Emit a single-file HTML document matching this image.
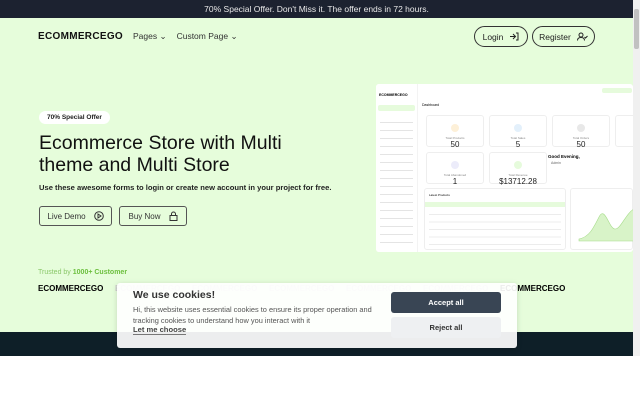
<!DOCTYPE html>
<html><head><meta charset="utf-8"><style>
*{box-sizing:border-box;margin:0;padding:0}
body{width:640px;height:400px;overflow:hidden;background:#fff;font-family:"Liberation Sans","DejaVu Sans",sans-serif;position:relative}
.page{position:absolute;left:0;top:0;width:633px;height:400px}
.top{height:18px;background:#1c2230;color:#e8e8e8;font-size:8.5px;text-align:center;line-height:18px}
.hero{position:absolute;top:18px;left:0;width:633px;height:314px;background:#e6fddb}
.band{position:absolute;top:332px;left:0;width:633px;height:24px;background:#0e1f28}
.logo{font-weight:bold;font-size:10px;letter-spacing:.3px;color:#111}
.nav{position:absolute;top:13px;left:38px;display:flex;align-items:center;gap:10px}
.nav span.l{font-size:8.5px;color:#333}
.btn{position:absolute;border:1px solid #333;border-radius:14px;font-size:8.5px;color:#222;display:flex;align-items:center;justify-content:center;gap:6px}
.pill{position:absolute;left:39px;top:93px;background:#fff;border-radius:8px;font-size:6.5px;font-weight:bold;padding:3px 8px;color:#222}
h1{position:absolute;left:39px;top:114px;font-size:19.5px;line-height:22px;font-weight:normal;color:#111;width:262px}
.sub{position:absolute;left:39px;top:165px;font-size:7.6px;font-weight:bold;color:#222}
.b2{position:absolute;top:188px;height:20px;border:1px solid #555;border-radius:3px;font-size:8px;display:flex;align-items:center;justify-content:center;gap:8px;color:#333}
.dash{position:absolute;left:376px;top:66px;width:257px;height:168px;background:#fff;border-radius:3px;overflow:hidden}
.card{position:absolute;background:#fff;border:1px solid #eee;border-radius:3px;text-align:center}
.card .t{font-size:3px;color:#888;margin-top:26px}
.card .v{font-size:8px;color:#222}
.ic{width:8px;height:8px;border-radius:50%;margin:8px auto 0}
.trusted{position:absolute;left:38px;top:251px;font-size:7px;color:#8bc86a}
.trusted b{color:#6cbf3e}
.logos{position:absolute;top:266px;left:38px;font-size:8px;font-weight:bold;white-space:nowrap}
.logos span{display:inline-block;width:77px}
.cookie{position:absolute;left:117px;top:283px;width:400px;height:65px;background:rgba(255,255,255,.92);border-radius:3px;box-shadow:0 1px 6px rgba(0,0,0,.15)}
.scroll{position:absolute;right:0;top:0;width:7px;height:356px;background:#f0f0f0}
.scroll div{position:absolute;left:1px;top:9px;width:5px;height:40px;background:#c1c1c1;border-radius:2px}
</style></head><body>
<div class="page">
<div class="top">70% Special Offer. Don't Miss it. The offer ends in 72 hours.</div>
<div class="hero">
 <div class="nav"><span class="logo">ECOMMERCEGO</span><span class="l">Pages ⌄</span><span class="l">Custom Page ⌄</span></div>
 <div class="btn" style="left:474px;top:8px;width:54px;height:21px">Login <svg width="10" height="9" viewBox="0 0 10 9" fill="none" stroke="#222" stroke-width="1"><path d="M1 4.5h5M4 2l2.5 2.5L4 7M7 1h2v7H7"/></svg></div>
 <div class="btn" style="left:532px;top:8px;width:63px;height:21px">Register <svg width="11" height="9" viewBox="0 0 11 9" fill="none" stroke="#222" stroke-width="1"><circle cx="4" cy="3" r="2"/><path d="M0.5 8.5c0-2 1.5-3 3.5-3s3.5 1 3.5 3M7.5 5l1 1 2-2"/></svg></div>
 <div class="pill">70% Special Offer</div>
 <h1>Ecommerce Store with Multi theme and Multi Store</h1>
 <div class="sub">Use these awesome forms to login or create new account in your project for free.</div>
 <div class="b2" style="left:39px;width:73px">Live Demo <svg width="10" height="10" viewBox="0 0 10 10" fill="none" stroke="#333"><circle cx="5" cy="5" r="4.3"/><path d="M4 3v4l3-2z"/></svg></div>
 <div class="b2" style="left:119px;width:68px">Buy Now <svg width="9" height="10" viewBox="0 0 9 10" fill="none" stroke="#333"><rect x="1" y="4.5" width="7" height="5"/><path d="M2.5 4.5V3a2 2 0 014 0v1.5"/></svg></div>
 <div class="dash">
  <div style="position:absolute;left:0;top:0;width:42px;height:168px;background:#fff;border-right:1px solid #f3f3f3">
   <div style="font-size:3.5px;font-weight:bold;margin:9px 0 0 3px">ECOMMERCEGO</div>
   <div style="margin:8px 2px 0;height:6px;background:#e6fbdc;border-radius:2px"></div>
   <div style="margin:4px 4px;height:130px;background:repeating-linear-gradient(#fff 0 7px,#e4e4e4 7px 8px)"></div>
  </div>
  <div style="position:absolute;left:46px;top:19px;font-size:3.5px">Dashboard</div>
  <div style="position:absolute;left:226px;top:4px;width:30px;height:5px;background:#e6fbdc;border-radius:2px"></div>
  <div class="card" style="left:50px;top:31px;width:58px;height:32px"><div class="ic" style="background:#fdf0d8"></div><div class="t" style="margin-top:4px">Total Products</div><div class="v">50</div></div>
  <div class="card" style="left:113px;top:31px;width:58px;height:32px"><div class="ic" style="background:#e3f0fb"></div><div class="t" style="margin-top:4px">Total Sales</div><div class="v">5</div></div>
  <div class="card" style="left:176px;top:31px;width:58px;height:32px"><div class="ic" style="background:#e8e8e8"></div><div class="t" style="margin-top:4px">Total Orders</div><div class="v">50</div></div>
  <div class="card" style="left:239px;top:31px;width:58px;height:32px"></div>
  <div class="card" style="left:50px;top:68px;width:58px;height:32px"><div class="ic" style="background:#ececfa"></div><div class="t" style="margin-top:4px">Total Abandoned</div><div class="v">1</div></div>
  <div class="card" style="left:113px;top:68px;width:58px;height:32px"><div class="ic" style="background:#e6fbdc"></div><div class="t" style="margin-top:4px">Total Revenue</div><div class="v">$13712.28</div></div>
  <div style="position:absolute;left:172px;top:70px;font-size:4.5px;font-weight:bold">Good Evening,</div>
  <div style="position:absolute;left:175px;top:77px;font-size:3.5px;color:#666">Admin</div>
  <div style="position:absolute;left:48px;top:104px;width:142px;height:62px;border:1px solid #eee;border-radius:3px">
   <div style="font-size:3px;margin:4px">Latest Products</div>
   <div style="height:5px;background:#e6fbdc;margin-top:5px"></div>
   <div style="height:38px;margin:2px 4px;background:repeating-linear-gradient(#fff 0 5px,#ececec 5px 6px,#fff 6px 7.5px)"></div>
  </div>
  <div style="position:absolute;left:194px;top:104px;width:63px;height:62px;border:1px solid #eee;border-radius:3px">
   <svg width="63" height="62" viewBox="0 0 63 62"><path d="M8 50 C18 48 22 40 28 28 C34 16 38 40 44 40 C50 40 55 24 63 20 V52 H8Z" fill="#d8f3c8" stroke="#a6dc8a" stroke-width=".6"/></svg>
  </div>
 </div>
 <div class="trusted">Trusted by <b>1000+ Customer</b></div>
 <div class="logos"><span>ECOMMERCEGO</span><span style="color:#ccc">ECOMMERCEGO</span><span style="color:#ccc">ECOMMERCEGO</span><span style="color:#ccc">ECOMMERCEGO</span><span style="color:#ccc">ECOMMERCEGO</span><span style="color:#ccc">ECOMMERCEGO</span><span>ECOMMERCEGO</span></div>
</div>
<div class="band"></div>
<div class="cookie">
 <div style="position:absolute;left:16px;top:6px;font-size:10.5px;font-weight:bold;color:#333">We use cookies!</div>
 <div style="position:absolute;left:16px;top:22px;font-size:7.4px;line-height:10.5px;color:#555;width:250px">Hi, this website uses essential cookies to ensure its proper operation and tracking cookies to understand how you interact with it</div>
 <div style="position:absolute;left:16px;top:42px;font-size:7.6px;font-weight:bold;color:#444;border-bottom:1px solid #777">Let me choose</div>
 <div style="position:absolute;left:274px;top:9px;width:110px;height:21px;background:#394554;border-radius:3px;color:#fff;font-size:7.5px;font-weight:bold;text-align:center;line-height:21px">Accept all</div>
 <div style="position:absolute;left:274px;top:34px;width:110px;height:21px;background:#eef0f2;border-radius:3px;color:#333;font-size:7.5px;font-weight:bold;text-align:center;line-height:21px">Reject all</div>
</div>
</div>
<div class="scroll"><div></div></div>
</body></html>
